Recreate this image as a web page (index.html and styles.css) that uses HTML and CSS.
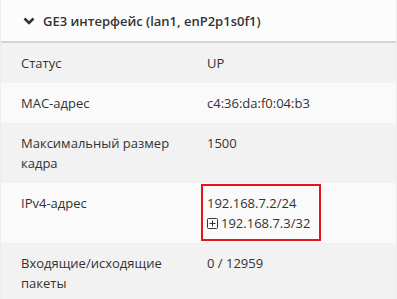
FILE: index.html
```html
<!DOCTYPE html>
<html lang="ru">
<head>
    <meta charset="UTF-8">
    <title>GE3 интерфейс</title>
    <link rel="stylesheet" href="styles.css">
</head>
<body>
    <div class="panel">
        <div class="panel-header">
            <svg class="chevron" width="12" height="8" viewBox="0 0 12 8">
                <path d="M1.5 1.5 L6 6 L10.5 1.5" fill="none" stroke="#333" stroke-width="2.6"/>
            </svg>
            <span class="title">GE3 интерфейс (lan1, enP2p1s0f1)</span>
        </div>
        <table class="info">
            <tr>
                <td class="label">Статус</td>
                <td class="value">UP</td>
            </tr>
            <tr>
                <td class="label">MAC-адрес</td>
                <td class="value">c4:36:da:f0:04:b3</td>
            </tr>
            <tr>
                <td class="label">Максимальный размер кадра</td>
                <td class="value">1500</td>
            </tr>
            <tr>
                <td class="label">IPv4-адрес</td>
                <td class="value">
                    <div class="highlight">
                        <div>192.168.7.2/24</div>
                        <div class="alias">
                            <svg class="plus" width="11" height="11" viewBox="0 0 11 11">
                                <rect x="0.5" y="0.5" width="10" height="10" rx="1" fill="none" stroke="#333"/>
                                <path d="M5.5 2.5 V8.5 M2.5 5.5 H8.5" stroke="#333"/>
                            </svg>
                            192.168.7.3/32
                        </div>
                    </div>
                </td>
            </tr>
            <tr>
                <td class="label">Входящие/исходящие пакеты</td>
                <td class="value">0 / 12959</td>
            </tr>
        </table>
    </div>
</body>
</html>
```
FILE: styles.css
```css
body {
    margin: 0;
    font-family: "Open Sans", sans-serif;
    font-size: 13px;
    color: #333;
    background-color: #fcfcfc;
}

.panel {
    border-left: 1px solid #eee;
    border-right: 1px solid #eee;
}

.panel-header {
    display: flex;
    align-items: center;
    height: 41px;
    padding-left: 22px;
    background-color: #fcfcfc;
    border-bottom: 2px solid #d4d4d4;
}

.chevron {
    margin-right: 8px;
}

.title {
    font-weight: 600;
}

.info {
    width: 100%;
    border-collapse: collapse;
}

.info tr:nth-child(odd) {
    background-color: #f2f2f2;
}

.info tr:nth-child(even) {
    background-color: #fafafa;
}

.info td {
    padding: 10px 0;
    line-height: 20px;
    vertical-align: top;
}

.label {
    box-sizing: border-box;
    width: 206px;
    padding-left: 20px !important;
    padding-right: 20px !important;
}

.highlight {
    width: 112px;
    margin: -9px 0 -8px -6px;
    padding: 7px 0 6px 4px;
    border: 2px solid #e8141c;
}

.alias {
    display: flex;
    align-items: center;
}

.plus {
    margin-right: 3px;
}
```
